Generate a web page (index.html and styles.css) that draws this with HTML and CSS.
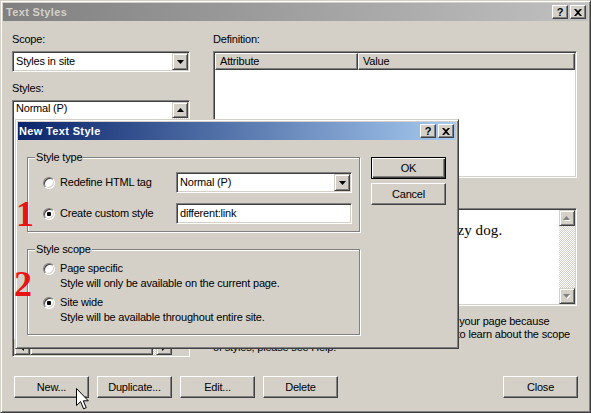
FILE: index.html
```html
<!DOCTYPE html>
<html>
<head>
<meta charset="utf-8">
<title>Text Styles</title>
<link rel="stylesheet" href="styles.css">
</head>
<body>
<div class="win">
  <div class="titlebar inactive">
    <span class="title-text">Text Styles</span>
    <div class="caption-btns">
      <span class="cbtn">?</span>
      <span class="cbtn"><svg width="8" height="7" viewBox="0 0 8 7"><path d="M0 0h2l2 2 2-2h2L5 3.5 8 7H6L4 5 2 7H0l3-3.5z"/></svg></span>
    </div>
  </div>

  <div class="client">
    <div class="col-left">
      <div class="label">Scope:</div>
      <div class="combo sunken">
        <span class="combo-text">Styles in site</span>
        <span class="sbtn drop"><svg width="7" height="4" viewBox="0 0 7 4"><path d="M0 0h7L3.5 4z"/></svg></span>
      </div>
      <div class="label gap">Styles:</div>
      <div class="listbox sunken">
        <div class="items">
          <div class="item">Normal (P)</div>
        </div>
        <div class="vscroll">
          <span class="sbtn"><svg width="7" height="4" viewBox="0 0 7 4"><path d="M0 4h7L3.5 0z"/></svg></span>
          <span class="track"></span>
          <span class="sbtn"><svg width="7" height="4" viewBox="0 0 7 4"><path d="M0 0h7L3.5 4z"/></svg></span>
        </div>
        <div class="hscroll">
          <span class="sbtn"><svg width="4" height="7" viewBox="0 0 4 7"><path d="M4 0v7L0 3.5z"/></svg></span>
          <span class="thumb"></span>
          <span class="track"></span>
          <span class="sbtn"><svg width="4" height="7" viewBox="0 0 4 7"><path d="M0 0v7L4 3.5z"/></svg></span>
        </div>
        <div class="corner"></div>
      </div>
    </div>

    <div class="col-right">
      <div class="label">Definition:</div>
      <div class="deftable sunken">
        <div class="thead">
          <span class="hcell attr">Attribute</span>
          <span class="hcell val">Value</span>
        </div>
      </div>
      <div class="label preview-label">Preview:</div>
      <div class="preview sunken">
        <div class="preview-text">The quick brown fox jumps over the lazy dog.</div>
        <div class="vscroll">
          <span class="sbtn"><svg width="8" height="5" viewBox="0 0 8 5"><path fill="#fff" d="M1 5h7L4.5 1z"/><path fill="#808080" d="M0 4h7L3.5 0z"/></svg></span>
          <span class="track"></span>
          <span class="sbtn"><svg width="8" height="5" viewBox="0 0 8 5"><path fill="#fff" d="M1 1h7L4.5 5z"/><path fill="#808080" d="M0 0h7L3.5 4z"/></svg></span>
        </div>
      </div>
      <p class="note">Site wide styles are stored with the whole site, not in your page because<br>they are shared by each page in the site. Click Help to learn about the scope<br>of styles, please see Help.</p>
    </div>

    <div class="btn-row">
      <span class="btn">New...</span>
      <span class="btn">Duplicate...</span>
      <span class="btn">Edit...</span>
      <span class="btn">Delete</span>
      <span class="btn push-right">Close</span>
    </div>
  </div>

  <div class="dialog">
    <div class="titlebar active">
      <span class="title-text">New Text Style</span>
      <div class="caption-btns">
        <span class="cbtn">?</span>
        <span class="cbtn"><svg width="8" height="7" viewBox="0 0 8 7"><path d="M0 0h2l2 2 2-2h2L5 3.5 8 7H6L4 5 2 7H0l3-3.5z"/></svg></span>
      </div>
    </div>
    <div class="dlg-body">
      <div class="groups">
        <div class="group type">
          <span class="group-label">Style type</span>
          <div class="opt-row">
            <span class="radio"></span>
            <span class="opt-label">Redefine HTML tag</span>
            <div class="combo field sunken">
              <span class="combo-text">Normal (P)</span>
              <span class="sbtn drop"><svg width="7" height="4" viewBox="0 0 7 4"><path d="M0 0h7L3.5 4z"/></svg></span>
            </div>
          </div>
          <div class="opt-row">
            <span class="radio"><span class="dot"></span></span>
            <span class="opt-label">Create custom style</span>
            <div class="field input sunken">different:link</div>
          </div>
        </div>
        <div class="group scope">
          <span class="group-label">Style scope</span>
          <div class="opt">
            <div class="opt-head"><span class="radio"></span><span>Page specific</span></div>
            <div class="opt-desc">Style will only be available on the current page.</div>
          </div>
          <div class="opt">
            <div class="opt-head"><span class="radio"><span class="dot"></span></span><span>Site wide</span></div>
            <div class="opt-desc">Style will be available throughout entire site.</div>
          </div>
        </div>
      </div>
      <div class="dlg-btns">
        <span class="btn default">OK</span>
        <span class="btn">Cancel</span>
      </div>
    </div>
  </div>

  <div class="num num1">1</div>
  <div class="num num2">2</div>

  <svg class="cursor" width="14" height="23" viewBox="0 0 14 23"><path d="M0.5 0.5L0.5 17.5L4.6 13.6L7.6 20.8L10.2 19.7L7.3 12.8L12.3 12.8Z" fill="#fff" stroke="#000" stroke-width="1" stroke-linejoin="miter"/></svg>
</div>
</body>
</html>
```

FILE: styles.css
```css
* { box-sizing: border-box; }

html, body { margin: 0; padding: 0; }

body {
  width: 591px;
  height: 413px;
  overflow: hidden;
  background: #D4D0C8;
  font-family: "Liberation Sans", Arial, sans-serif;
  font-size: 11px;
  line-height: 13px;
  letter-spacing: -0.2px;
  color: #000;
}

.win {
  position: relative;
  width: 591px;
  height: 413px;
  background: #D4D0C8;
  border: 1px solid;
  border-color: #D4D0C8 #404040 #404040 #D4D0C8;
  box-shadow: inset 1px 1px #fff, inset -1px -1px #808080;
  padding: 2px;
}

/* ---- title bars ---- */
.titlebar {
  height: 18px;
  display: flex;
  align-items: center;
  justify-content: space-between;
  padding: 0 2px 0 3px;
}
.titlebar.inactive { background: linear-gradient(to right, #808080, #C0C0C0); }
.titlebar.active { background: linear-gradient(to right, #0A246A, #A6CAF0); padding-left: 1px; }

.title-text {
  font-weight: bold;
  font-size: 11px;
  letter-spacing: 0.35px;
  color: #D4D0C8;
}
.active .title-text { color: #fff; }

.caption-btns { display: flex; gap: 2px; }

.cbtn {
  width: 16px;
  height: 14px;
  display: flex;
  align-items: center;
  justify-content: center;
  background: #D4D0C8;
  border: 1px solid;
  border-color: #fff #404040 #404040 #fff;
  box-shadow: inset -1px -1px #808080;
  font-weight: bold;
  font-size: 11px;
  letter-spacing: 0;
  line-height: 12px;
}

/* ---- 3D primitives ---- */
.sunken {
  background: #fff;
  border: 1px solid;
  border-color: #808080 #fff #fff #808080;
  box-shadow: inset 1px 1px #404040, inset -1px -1px #D4D0C8;
}

.sbtn {
  width: 16px;
  height: 16px;
  flex: none;
  display: flex;
  align-items: center;
  justify-content: center;
  background: #D4D0C8;
  border: 1px solid;
  border-color: #D4D0C8 #404040 #404040 #D4D0C8;
  box-shadow: inset 1px 1px #fff, inset -1px -1px #808080;
}

.track {
  flex: 1;
  background-color: #fff;
  background-image: repeating-conic-gradient(#fff 0 25%, #D4D0C8 0 50%);
  background-size: 2px 2px;
}

.btn {
  width: 75px;
  height: 22px;
  flex: none;
  display: flex;
  align-items: center;
  justify-content: center;
  background: #D4D0C8;
  border: 1px solid;
  border-color: #fff #404040 #404040 #fff;
  box-shadow: inset -1px -1px #808080;
}
.btn.default {
  border-color: #000;
  box-shadow: inset 1px 1px #fff, inset -1px -1px #404040, inset -2px -2px #808080;
}

/* ---- main client ---- */
.client {
  display: grid;
  grid-template-columns: 178px 364px;
  column-gap: 23px;
  padding: 12px 0 0 9px;
}

.col-left, .col-right { display: flex; flex-direction: column; }

.label { height: 13px; margin-bottom: 5px; }
.label.gap { margin-top: 10px; }
.label.preview-label { margin-top: 13px; margin-bottom: 4px; }

.combo {
  height: 21px;
  display: flex;
  align-items: center;
  padding: 1px;
}
.combo-text { flex: 1; padding-left: 2px; white-space: nowrap; }
.drop { height: 17px; }

.listbox {
  height: 257px;
  padding: 1px;
  display: grid;
  grid-template-columns: 1fr 16px;
  grid-template-rows: 1fr 16px;
}
.items { padding: 0 2px; overflow: hidden; }
.item { height: 13px; white-space: nowrap; }

.vscroll { display: flex; flex-direction: column; }
.hscroll { display: flex; }
.thumb {
  width: 123px;
  flex: none;
  background: #D4D0C8;
  border: 1px solid;
  border-color: #D4D0C8 #404040 #404040 #D4D0C8;
  box-shadow: inset 1px 1px #fff, inset -1px -1px #808080;
}
.corner { background: #D4D0C8; }

.deftable {
  height: 127px;
  padding: 1px;
  display: flex;
  flex-direction: column;
}
.thead { display: flex; }
.hcell {
  height: 17px;
  display: flex;
  align-items: center;
  padding-left: 4px;
  background: #D4D0C8;
  border: 1px solid;
  border-color: #fff #404040 #404040 #fff;
  box-shadow: inset -1px -1px #808080;
}
.hcell.attr { width: 143px; }
.hcell.val { flex: 1; }

.preview {
  height: 98px;
  padding: 1px;
  display: flex;
}
.preview-text {
  flex: 1;
  padding: 12px 0 0 5px;
  font-family: "Liberation Serif", "Times New Roman", serif;
  font-size: 15px;
  line-height: 17px;
  letter-spacing: 0.1px;
  white-space: nowrap;
  overflow: hidden;
}

.note { margin: 9px 0 0; white-space: nowrap; }

.btn-row {
  grid-column: 1 / -1;
  display: flex;
  gap: 8px;
  margin-top: 19px;
  padding-left: 2px;
}
.btn.push-right { margin-left: auto; margin-right: -1px; }

/* ---- New Text Style dialog ---- */
.dialog {
  position: absolute;
  left: 14px;
  top: 118px;
  width: 444px;
  height: 230px;
  background: #D4D0C8;
  border: 1px solid;
  border-color: #D4D0C8 #404040 #404040 #D4D0C8;
  box-shadow: inset 1px 1px #fff, inset -1px -1px #808080;
  padding: 2px;
}

.dlg-body {
  display: flex;
  gap: 11px;
  padding: 17px 9px 0 9px;
}

.groups { width: 333px; display: flex; flex-direction: column; }

.group {
  position: relative;
  border: 1px solid #808080;
  box-shadow: inset 1px 1px #fff, 1px 1px #fff;
}
.group-label {
  position: absolute;
  top: -7px;
  left: 7px;
  padding: 0 1px;
  background: #D4D0C8;
  white-space: nowrap;
}

.group.type {
  padding: 14px 7px 7px 15px;
  display: flex;
  flex-direction: column;
  gap: 10px;
}
.opt-row { display: flex; align-items: center; height: 21px; }
.opt-label { width: 116px; flex: none; white-space: nowrap; }
.field { flex: 1; height: 21px; }
.field.input { display: flex; align-items: center; padding-left: 3px; }

.group.scope {
  margin-top: 17px;
  padding: 12px 7px 10px 15px;
  display: flex;
  flex-direction: column;
  gap: 6px;
}
.opt { display: flex; flex-direction: column; gap: 2px; }
.opt-head { display: flex; align-items: center; height: 13px; }
.opt-desc { padding-left: 17px; white-space: nowrap; }

.radio {
  width: 12px;
  height: 12px;
  flex: none;
  margin-right: 5px;
  border-radius: 50%;
  background: #fff;
  border: 1px solid;
  border-color: #808080 #fff #fff #808080;
  box-shadow: inset 1px 1px #404040, inset -1px -1px #D4D0C8;
  display: flex;
  align-items: center;
  justify-content: center;
}
.dot { width: 4px; height: 4px; border-radius: 1px; background: #000; }

.dlg-btns { width: 75px; display: flex; flex-direction: column; gap: 4px; }

/* ---- annotations ---- */
.num {
  position: absolute;
  font-family: "Liberation Serif", "Times New Roman", serif;
  font-weight: bold;
  font-size: 36px;
  line-height: 36px;
  letter-spacing: 0;
  color: #E81414;
}
.num1 { left: 15px; top: 195px; }
.num2 { left: 13px; top: 265px; }

.cursor { position: absolute; left: 75px; top: 387px; }
```
